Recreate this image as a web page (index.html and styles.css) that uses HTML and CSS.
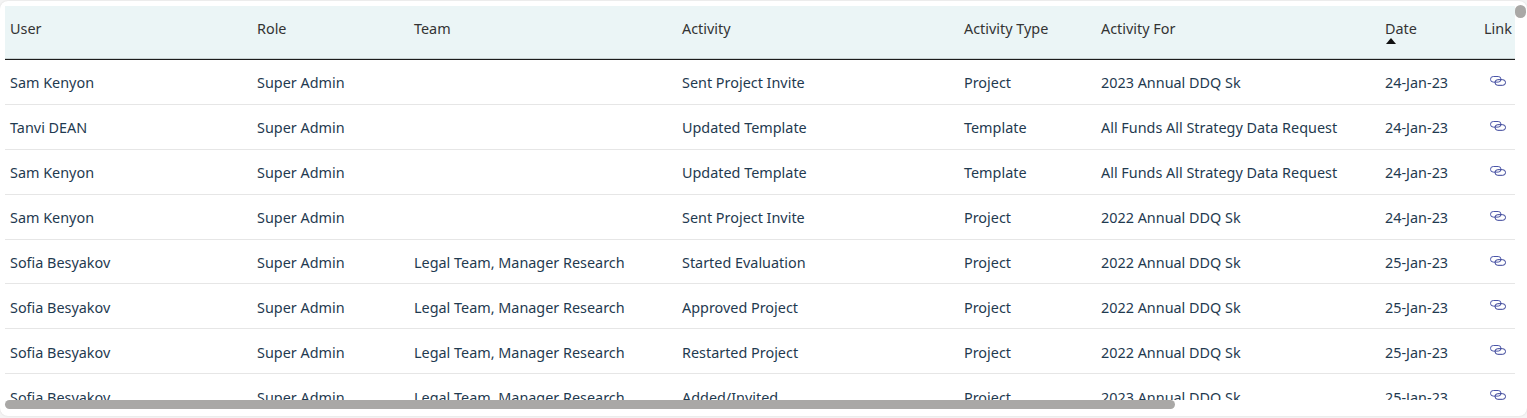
FILE: index.html
```html
<!DOCTYPE html>
<html lang="en">
<head>
<meta charset="utf-8">
<title>Activity log</title>
<link rel="stylesheet" href="styles.css">
</head>
<body>
<svg class="defs" width="0" height="0" aria-hidden="true"><defs>
<symbol id="link" viewBox="0 0 16 10"><g fill="none" stroke-width="1"><rect x=".5" y=".5" width="10.500" height="5.600" rx="2.800" stroke="#4a55a8"/><rect x="5" y="3.700" width="10.500" height="5.600" rx="2.800" stroke="#353f96"/></g></symbol>
</defs></svg>
<main class="card">
<div class="viewport">
<table class="log">
<colgroup>
<col class="c-user"><col class="c-role"><col class="c-team"><col class="c-activity"><col class="c-type"><col class="c-for"><col class="c-date"><col class="c-link">
</colgroup>
<thead>
<tr><th>User</th><th>Role</th><th>Team</th><th>Activity</th><th>Activity Type</th><th>Activity For</th><th class="sorted">Date<span class="caret"></span></th><th>Link</th></tr>
</thead>
<tbody>
<tr><td>Sam Kenyon</td><td>Super Admin</td><td></td><td>Sent Project Invite</td><td>Project</td><td>2023 Annual DDQ Sk</td><td>24-Jan-23</td><td class="icon"><svg width="16" height="10"><use href="#link"/></svg></td></tr>
<tr><td>Tanvi DEAN</td><td>Super Admin</td><td></td><td>Updated Template</td><td>Template</td><td>All Funds All Strategy Data Request</td><td>24-Jan-23</td><td class="icon"><svg width="16" height="10"><use href="#link"/></svg></td></tr>
<tr><td>Sam Kenyon</td><td>Super Admin</td><td></td><td>Updated Template</td><td>Template</td><td>All Funds All Strategy Data Request</td><td>24-Jan-23</td><td class="icon"><svg width="16" height="10"><use href="#link"/></svg></td></tr>
<tr><td>Sam Kenyon</td><td>Super Admin</td><td></td><td>Sent Project Invite</td><td>Project</td><td>2022 Annual DDQ Sk</td><td>24-Jan-23</td><td class="icon"><svg width="16" height="10"><use href="#link"/></svg></td></tr>
<tr><td>Sofia Besyakov</td><td>Super Admin</td><td>Legal Team, Manager Research</td><td>Started Evaluation</td><td>Project</td><td>2022 Annual DDQ Sk</td><td>25-Jan-23</td><td class="icon"><svg width="16" height="10"><use href="#link"/></svg></td></tr>
<tr><td>Sofia Besyakov</td><td>Super Admin</td><td>Legal Team, Manager Research</td><td>Approved Project</td><td>Project</td><td>2022 Annual DDQ Sk</td><td>25-Jan-23</td><td class="icon"><svg width="16" height="10"><use href="#link"/></svg></td></tr>
<tr><td>Sofia Besyakov</td><td>Super Admin</td><td>Legal Team, Manager Research</td><td>Restarted Project</td><td>Project</td><td>2022 Annual DDQ Sk</td><td>25-Jan-23</td><td class="icon"><svg width="16" height="10"><use href="#link"/></svg></td></tr>
<tr><td>Sofia Besyakov</td><td>Super Admin</td><td>Legal Team, Manager Research</td><td>Added/Invited</td><td>Project</td><td>2023 Annual DDQ Sk</td><td>25-Jan-23</td><td class="icon"><svg width="16" height="10"><use href="#link"/></svg></td></tr>
</tbody>
</table>
</div>
<div class="thumb-h"></div>
<div class="thumb-v"></div>
</main>
</body>
</html>
```
FILE: styles.css
```css
* { box-sizing: border-box; }
html, body { margin: 0; height: 100%; }
body {
  background: #f4f4f4;
  font-family: "Noto Sans", "Open Sans", sans-serif;
  font-size: 14.4px;
  color: #1f3a50;
  overflow: hidden;
}
.defs { position: absolute; }
.card {
  position: relative;
  height: 415px;
  margin-top: 1px;
  padding: 5px 12px 15px 5px;
  background: #fff;
  border-radius: 8px;
  box-shadow: 0 0 2px rgba(0, 0, 0, .12);
}
.viewport { height: 394px; overflow: hidden; }
.log {
  width: 1510px;
  table-layout: fixed;
  border-collapse: separate;
  border-spacing: 0;
}
.c-user { width: 247px; }
.c-role { width: 157px; }
.c-team { width: 268px; }
.c-activity { width: 282px; }
.c-type { width: 137px; }
.c-for { width: 284px; }
.c-date { width: 99px; }
.c-link { width: 36px; }
th {
  height: 54px;
  padding: 0 5px 8px;
  background: #ebf5f6;
  border-bottom: 1px solid #1c1c1c;
  box-shadow: inset 0 -1px 0 #c9d2d3;
  color: #333;
  font-weight: 400;
  text-align: left;
  vertical-align: middle;
  white-space: nowrap;
}
th.sorted { position: relative; }
.caret {
  position: absolute;
  left: 6px;
  top: 32px;
  border-left: 5px solid transparent;
  border-right: 5px solid transparent;
  border-bottom: 6px solid #111;
}
td {
  height: 44.9px;
  padding: 2px 5px 0;
  border-bottom: 1px solid #e6e6e6;
  white-space: nowrap;
}
.icon { padding-left: 11px; }
.icon svg { display: block; margin-top: -4px; }
.thumb-h {
  position: absolute;
  left: 5px;
  top: 399px;
  width: 1170px;
  height: 9px;
  border-radius: 5px;
  background: #a9a8a6;
}
.thumb-v {
  position: absolute;
  left: 1515px;
  top: 4px;
  width: 11px;
  height: 13px;
  border-radius: 6px;
  background: #a9a8a6;
}
```
